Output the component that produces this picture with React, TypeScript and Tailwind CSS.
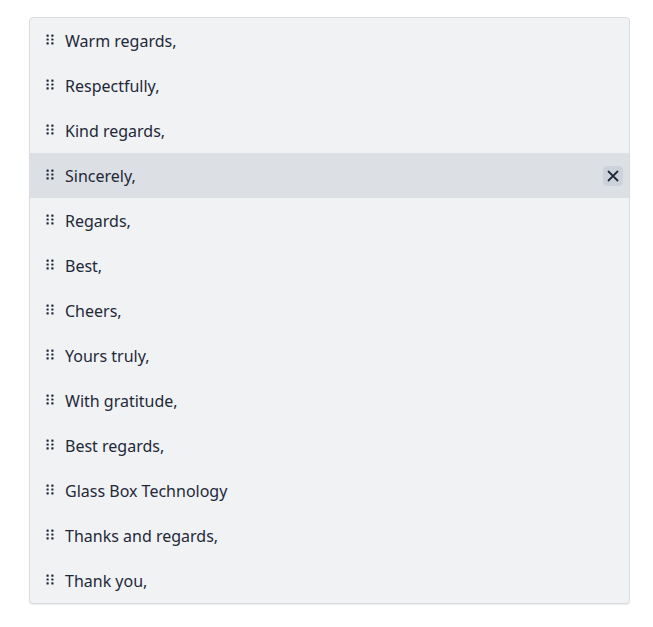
import React, { useState } from 'react';

const items = [
  'Warm regards,',
  'Respectfully,',
  'Kind regards,',
  'Sincerely,',
  'Regards,',
  'Best,',
  'Cheers,',
  'Yours truly,',
  'With gratitude,',
  'Best regards,',
  'Glass Box Technology',
  'Thanks and regards,',
  'Thank you,',
];

const Grip = () => (
  <svg width="8" height="11" viewBox="0 0 8 11" className="shrink-0 text-[#1e293b] mb-[3px]" fill="currentColor">
    <rect x="0.5" y="0.5" width="2.2" height="2.2" rx="0.5" />
    <rect x="5.3" y="0.5" width="2.2" height="2.2" rx="0.5" />
    <rect x="0.5" y="4.4" width="2.2" height="2.2" rx="0.5" />
    <rect x="5.3" y="4.4" width="2.2" height="2.2" rx="0.5" />
    <rect x="0.5" y="8.3" width="2.2" height="2.2" rx="0.5" />
    <rect x="5.3" y="8.3" width="2.2" height="2.2" rx="0.5" />
  </svg>
);

const App = () => {
  const [hovered, setHovered] = useState(3);

  return (
    <div className="min-h-screen w-full bg-white pt-[17px] pl-[29px]" style={{ fontFamily: '"Noto Sans", "Open Sans", sans-serif' }}>
      <div className="w-[601px] bg-[#f1f2f4] border border-[#d9dce1] rounded-[4px] shadow-[0_1px_1px_rgba(0,0,0,0.08)] overflow-hidden">
        {items.map((item, i) => (
          <div
            key={item}
            onMouseEnter={() => setHovered(i)}
            className={`h-[45px] flex items-center pl-[16px] pr-[6px] ${hovered === i ? 'bg-[#dcdfe4]' : ''}`}
          >
            <Grip />
            <span className="ml-[11px] text-[16px] text-[#1e2939] flex-1 leading-none pt-[1px]">{item}</span>
            {hovered === i && (
              <button className="w-[20px] h-[20px] rounded-[4px] bg-[#cdd2da] flex items-center justify-center text-[#1e293b]">
                <svg width="12" height="12" viewBox="0 0 12 12" stroke="currentColor" strokeWidth="1.8" strokeLinecap="round">
                  <path d="M1.5 1.5 L10.5 10.5 M10.5 1.5 L1.5 10.5" />
                </svg>
              </button>
            )}
          </div>
        ))}
      </div>
    </div>
  );
};

export default App;
